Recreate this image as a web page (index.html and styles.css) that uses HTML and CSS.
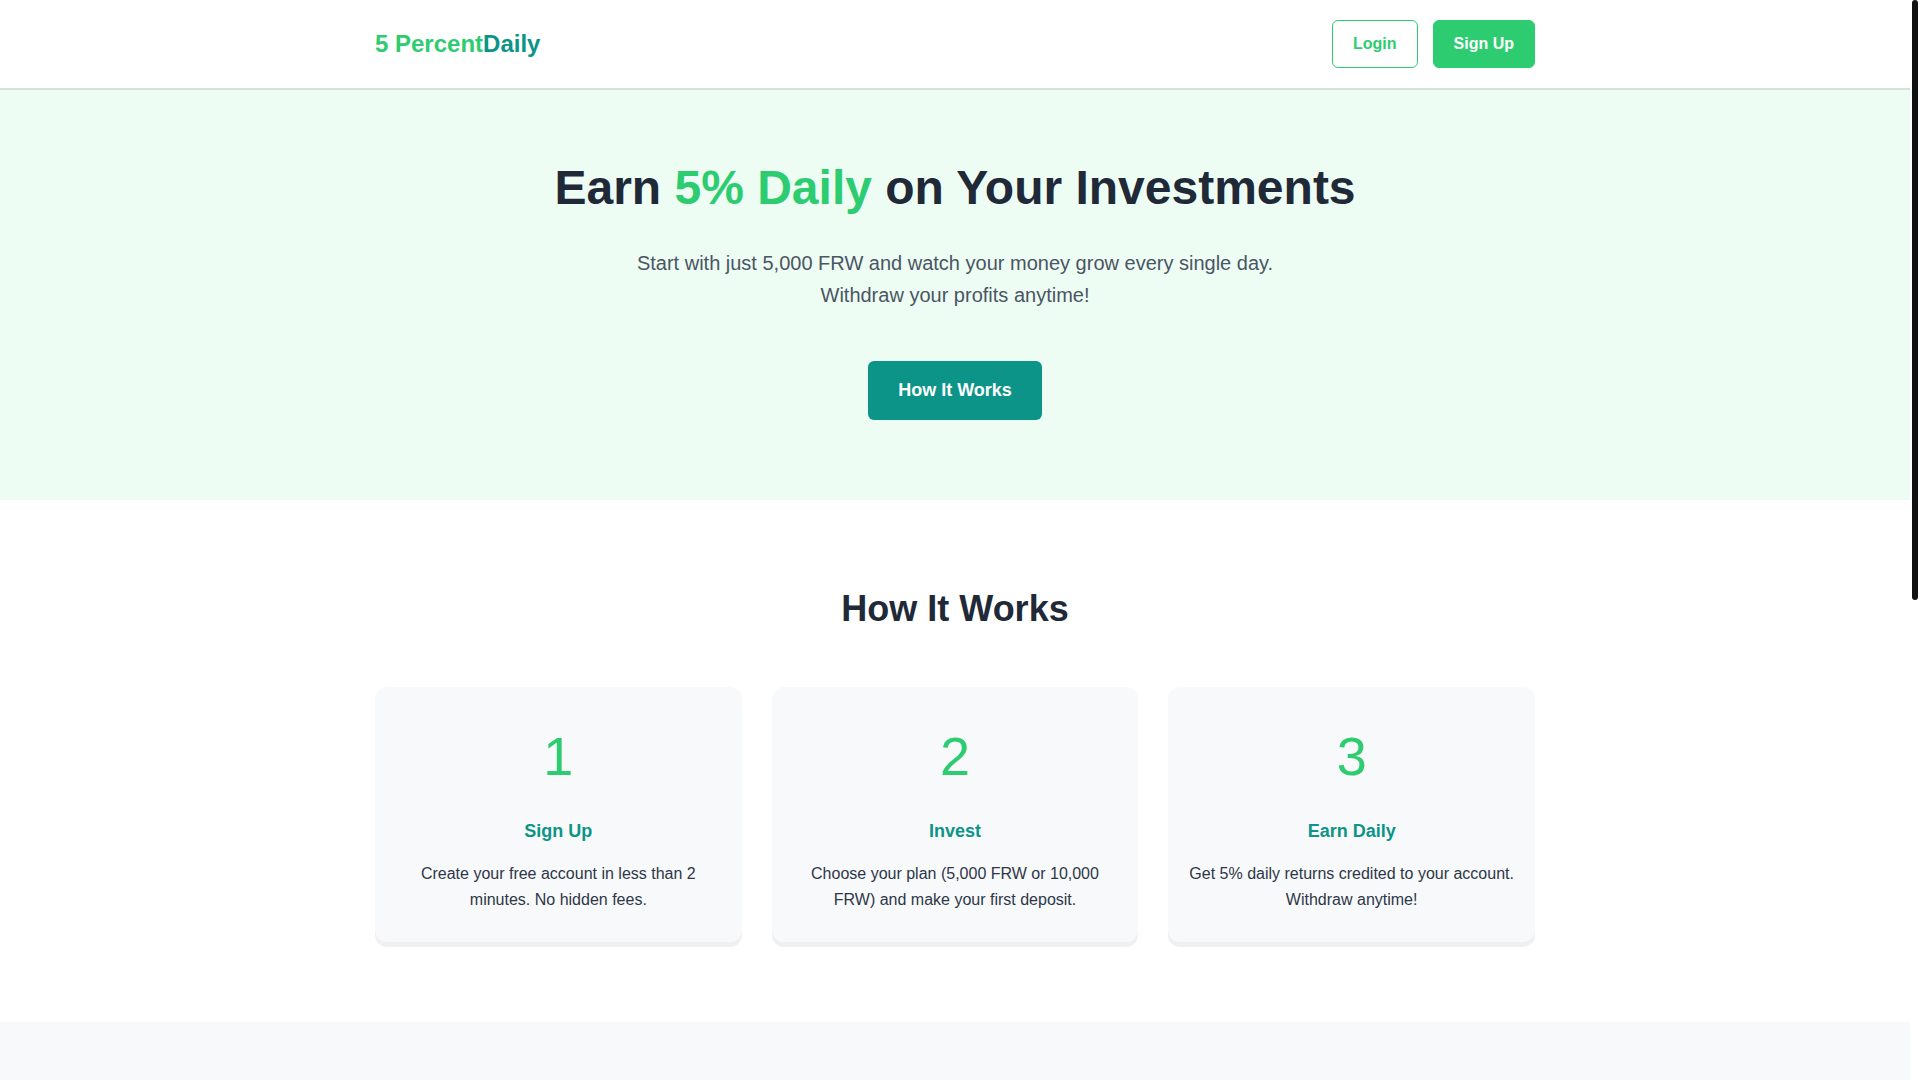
FILE: index.html
```html
<!DOCTYPE html>
<html lang="en">
<head>
<meta charset="UTF-8">
<title>5 PercentDaily - Earn 5% Daily</title>
<link rel="stylesheet" href="styles.css">
</head>
<body>
<header class="navbar">
  <div class="container nav-inner">
    <a href="#" class="logo"><span class="logo-green">5 Percent</span><span class="logo-teal">Daily</span></a>
    <div class="nav-actions">
      <a href="#" class="btn btn-outline">Login</a>
      <a href="#" class="btn btn-solid">Sign Up</a>
    </div>
  </div>
</header>

<section class="hero">
  <div class="container">
    <h1 class="hero-title">Earn <span class="accent">5% Daily</span> on Your Investments</h1>
    <p class="hero-sub">Start with just 5,000 FRW and watch your money grow every single day. Withdraw your profits anytime!</p>
    <a href="#how" class="btn-hero">How It Works</a>
  </div>
</section>

<section class="steps" id="how">
  <div class="container">
    <h2 class="section-title">How It Works</h2>
    <div class="steps-grid">
      <div class="step-card">
        <div class="step-num">1</div>
        <h3 class="step-title">Sign Up</h3>
        <p class="step-text">Create your free account in less than 2 minutes. No hidden fees.</p>
      </div>
      <div class="step-card">
        <div class="step-num">2</div>
        <h3 class="step-title">Invest</h3>
        <p class="step-text">Choose your plan (5,000 FRW or 10,000 FRW) and make your first deposit.</p>
      </div>
      <div class="step-card">
        <div class="step-num">3</div>
        <h3 class="step-title">Earn Daily</h3>
        <p class="step-text">Get 5% daily returns credited to your account. Withdraw anytime!</p>
      </div>
    </div>
  </div>
</section>

<section class="plans" aria-label="Investment Plans"></section>

<div class="scroll-track" aria-hidden="true"><div class="scroll-thumb"></div></div>
</body>
</html>
```

FILE: styles.css
```css
* {
  box-sizing: border-box;
}

body {
  margin: 0;
  padding-right: 10px;
  font-family: "Liberation Sans", Arial, Helvetica, sans-serif;
  color: #1f2937;
  background: #ffffff;
  line-height: 1.6;
}

a {
  text-decoration: none;
}

.container {
  max-width: 1200px;
  margin: 0 auto;
  padding: 0 20px;
}

/* Navbar */
.navbar {
  background: #ffffff;
  border-bottom: 2px solid #d5e3db;
}

.nav-inner {
  display: flex;
  align-items: center;
  justify-content: space-between;
  padding-top: 20px;
  padding-bottom: 20px;
}

.logo {
  font-size: 24px;
  font-weight: 700;
  line-height: 1.15;
}

.logo-green {
  color: #2ecc71;
}

.logo-teal {
  color: #0d9488;
}

.nav-actions {
  display: flex;
  gap: 15px;
}

.btn {
  display: inline-block;
  font-size: 16px;
  font-weight: 700;
  line-height: 22px;
  padding: 12px 20px;
  border: 1px solid #2ecc71;
  border-radius: 6px;
}

.btn-outline {
  color: #2ecc71;
  background: #ffffff;
}

.btn-solid {
  color: #ffffff;
  background: #2ecc71;
}

/* Hero */
.hero {
  background: #edfdf4;
  padding: 60px 0 80px;
  text-align: center;
}

.hero-title {
  margin: 0 0 20px;
  font-size: 48px;
  font-weight: 700;
  line-height: 1.6;
  color: #1f2937;
}

.accent {
  color: #2ecc71;
}

.hero-sub {
  max-width: 700px;
  margin: 0 auto 50px;
  font-size: 20px;
  line-height: 1.6;
  color: #4b5563;
}

.btn-hero {
  display: inline-block;
  background: #0d9488;
  color: #ffffff;
  font-size: 18px;
  font-weight: 700;
  line-height: 1.6;
  padding: 15px 30px;
  border-radius: 6px;
}

/* Steps */
.steps {
  padding: 80px 0;
  text-align: center;
}

.section-title {
  margin: 0 0 50px;
  font-size: 36px;
  font-weight: 700;
  line-height: 1.6;
  color: #1f2937;
}

.steps-grid {
  display: grid;
  grid-template-columns: repeat(3, 1fr);
  gap: 30px;
}

.step-card {
  background: #f8f9fa;
  border-radius: 12px;
  padding: 30px 20px;
  box-shadow: 0 5px 0 rgba(0, 0, 0, 0.06);
}

.step-num {
  font-size: 54px;
  line-height: 78px;
  color: #2ecc71;
  margin-bottom: 22px;
}

.step-title {
  margin: 0 0 15px;
  font-size: 18px;
  font-weight: 700;
  line-height: 1.6;
  color: #0d9488;
}

.step-text {
  margin: 0;
  font-size: 16px;
  line-height: 1.6;
  color: #2d3748;
}

/* Plans */
.plans {
  background: #f8f9fa;
  min-height: 922px;
}

/* Scrollbar overlay */
.scroll-track {
  position: fixed;
  top: 0;
  right: 0;
  width: 10px;
  height: 100%;
  background: #ffffff;
}

.scroll-thumb {
  margin-left: 2px;
  width: 6px;
  height: 600px;
  background: #111111;
  border-radius: 3px;
}
```
